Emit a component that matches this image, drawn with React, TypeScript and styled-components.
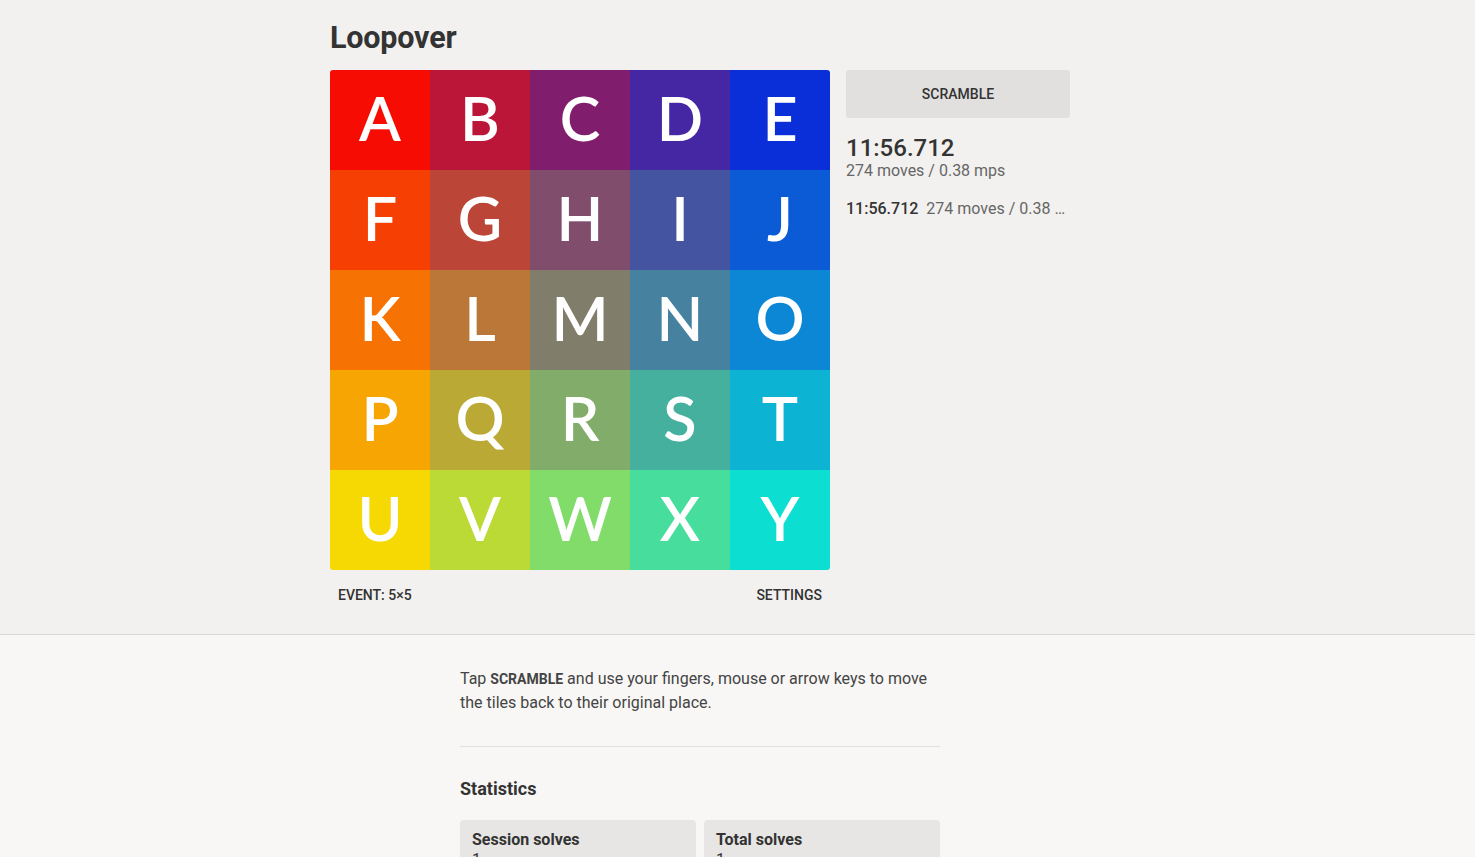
import styled, { createGlobalStyle } from "styled-components"

const SIZE = 5
const LETTERS = "ABCDEFGHIJKLMNOPQRSTUVWXY"

// corner colours of the solved board, blended across the grid
const TL = [246, 12, 2]
const TR = [10, 47, 216]
const BL = [246, 216, 2]
const BR = [12, 223, 209]

const mix = (a: number[], b: number[], t: number) => a.map((v, i) => v + (b[i] - v) * t)

const tileColor = (row: number, col: number) => {
  const x = col / (SIZE - 1)
  const y = row / (SIZE - 1)
  const top = mix(TL, TR, x)
  const bottom = mix(BL, BR, x)
  const [r, g, b] = mix(top, bottom, y).map(Math.round)
  return `rgb(${r}, ${g}, ${b})`
}

const GlobalStyle = createGlobalStyle`
  html, body {
    margin: 0;
    padding: 0;
    background: #f8f7f5;
    font-family: Roboto, "Liberation Sans", sans-serif;
    color: #333;
  }
`

export default function App() {
  return (
    <>
      <GlobalStyle />
      <Top>
        <TopInner>
          <Title>Loopover</Title>
          <Main>
            <BoardColumn>
              <Board>
                {LETTERS.split("").map((letter, i) => (
                  <Tile key={letter} $bg={tileColor(Math.floor(i / SIZE), i % SIZE)}>
                    {letter}
                  </Tile>
                ))}
              </Board>
              <BoardFooter>
                <TextButton>Event: 5×5</TextButton>
                <TextButton>Settings</TextButton>
              </BoardFooter>
            </BoardColumn>
            <Side>
              <ScrambleButton>Scramble</ScrambleButton>
              <Current>
                <CurrentTime>11:56.712</CurrentTime>
                <CurrentMoves>274 moves / 0.38 mps</CurrentMoves>
              </Current>
              <SolveList>
                <SolveItem>
                  <SolveTime>11:56.712</SolveTime>
                  <SolveMoves>274 moves / 0.38 mps</SolveMoves>
                </SolveItem>
              </SolveList>
            </Side>
          </Main>
        </TopInner>
      </Top>
      <Bottom>
        <Content>
          <Intro>
            Tap <Strong>SCRAMBLE</Strong> and use your fingers, mouse or arrow keys to move the tiles
            back to their original place.
          </Intro>
          <Divider />
          <Heading>Statistics</Heading>
          <Stats>
            <StatCard>
              <StatLabel>Session solves</StatLabel>
              <StatValue>1</StatValue>
            </StatCard>
            <StatCard>
              <StatLabel>Total solves</StatLabel>
              <StatValue>1</StatValue>
            </StatCard>
          </Stats>
        </Content>
      </Bottom>
    </>
  )
}

const Top = styled.div`
  background: #f2f1ef;
  border-bottom: 1px solid #d9d8d6;
`

// the right padding keeps the board column slightly left of centre
const TopInner = styled.div`
  width: 740px;
  margin: 0 auto;
  padding: 18px 75px 25px 0;
`

const Title = styled.h1`
  margin: 0 0 12px 0;
  font-size: 30.5px;
  line-height: 40px;
  font-weight: 700;
  color: #333;
  letter-spacing: -0.2px;
`

const Main = styled.div`
  display: flex;
  gap: 16px;
  align-items: flex-start;
`

const BoardColumn = styled.div`
  width: 500px;
`

const Board = styled.div`
  display: grid;
  grid-template-columns: repeat(5, 100px);
  grid-auto-rows: 100px;
  border-radius: 3px;
  overflow: hidden;
`

const Tile = styled.div<{ $bg: string }>`
  display: flex;
  align-items: center;
  justify-content: center;
  background: ${({ $bg }) => $bg};
  color: #fff;
  font-family: Lato, "Open Sans", sans-serif;
  font-size: 61px;
  font-weight: 600;
  line-height: 1;
  padding-bottom: 6px;
  box-sizing: border-box;
`

const BoardFooter = styled.div`
  display: flex;
  justify-content: space-between;
  margin-top: 11px;
`

const TextButton = styled.button`
  border: none;
  background: none;
  padding: 6px 8px;
  font-family: Roboto, "Liberation Sans", sans-serif;
  font-size: 14px;
  font-weight: 500;
  text-transform: uppercase;
  color: #333;
  cursor: pointer;
`

const Side = styled.div`
  width: 224px;
`

const ScrambleButton = styled.button`
  width: 100%;
  height: 48px;
  border: none;
  border-radius: 3px;
  background: #e1e0de;
  font-family: Roboto, "Liberation Sans", sans-serif;
  font-size: 14px;
  font-weight: 500;
  text-transform: uppercase;
  color: #333;
  cursor: pointer;
`

const Current = styled.div`
  margin-top: 16px;
`

const CurrentTime = styled.div`
  font-size: 24px;
  line-height: 28px;
  font-weight: 500;
  color: #333;
`

const CurrentMoves = styled.div`
  font-size: 16px;
  line-height: 18px;
  color: #666;
`

const SolveList = styled.ul`
  list-style: none;
  margin: 17px 0 0 0;
  padding: 0;
`

const SolveItem = styled.li`
  display: flex;
  gap: 8px;
  font-size: 16px;
  line-height: 24px;
  white-space: nowrap;
`

const SolveTime = styled.span`
  font-weight: 500;
  color: #333;
`

const SolveMoves = styled.span`
  color: #666;
  overflow: hidden;
  text-overflow: ellipsis;
`

const Bottom = styled.div`
  background: #f8f7f5;
`

const Content = styled.div`
  width: 480px;
  margin: 0 auto;
  padding: 32px 75px 40px 0;
`

const Intro = styled.p`
  margin: 0;
  font-size: 16px;
  line-height: 24px;
  color: #444;
`

const Strong = styled.strong`
  font-size: 14px;
  font-weight: 700;
`

const Divider = styled.hr`
  border: none;
  border-top: 1px solid #e1e0de;
  margin: 31px 0 30px 0;
`

const Heading = styled.h2`
  margin: 0 0 19px 0;
  font-size: 18px;
  line-height: 24px;
  font-weight: 700;
  color: #333;
`

const Stats = styled.div`
  display: grid;
  grid-template-columns: 1fr 1fr;
  gap: 8px;
`

const StatCard = styled.div`
  background: #e7e6e4;
  border-radius: 4px;
  padding: 10px 12px;
`

const StatLabel = styled.div`
  font-size: 16px;
  line-height: 20px;
  font-weight: 700;
  color: #333;
`

const StatValue = styled.div`
  font-size: 16px;
  line-height: 20px;
  color: #333;
`
